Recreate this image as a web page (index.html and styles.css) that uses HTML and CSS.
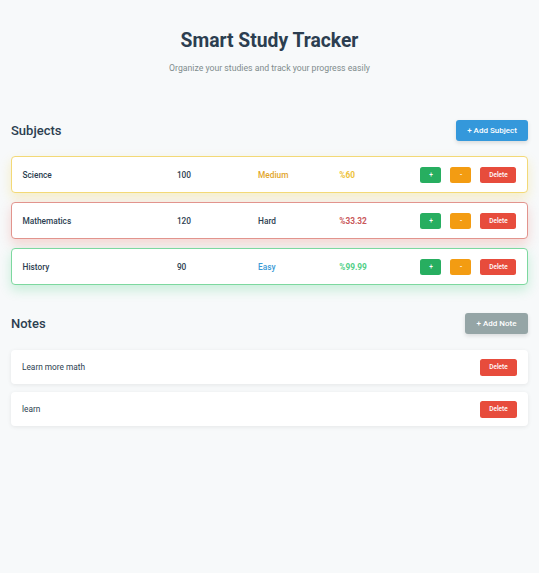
FILE: index.html
```html
<!DOCTYPE html>
<html>
<head>
<meta charset="utf-8">
<link rel="stylesheet" href="styles.css">
</head>
<body>
<div class="app">
  <header class="hero">
    <h1 class="title">Smart Study Tracker</h1>
    <p class="subtitle">Organize your studies and track your progress easily</p>
  </header>

  <section class="section subjects">
    <div class="section-head">
      <h2 class="section-title">Subjects</h2>
      <button class="add-btn add-blue">+ Add Subject</button>
    </div>
    <div class="list">
      <div class="subject medium">
        <span class="name">Science</span>
        <span class="hours">100</span>
        <span class="level level-medium">Medium</span>
        <span class="pct pct-yellow">%60</span>
        <span class="actions"><button class="sbtn plus">+</button><button class="sbtn minus">-</button><button class="sbtn del">Delete</button></span>
      </div>
      <div class="subject hard">
        <span class="name">Mathematics</span>
        <span class="hours">120</span>
        <span class="level level-hard">Hard</span>
        <span class="pct pct-red">%33.32</span>
        <span class="actions"><button class="sbtn plus">+</button><button class="sbtn minus">-</button><button class="sbtn del">Delete</button></span>
      </div>
      <div class="subject easy">
        <span class="name">History</span>
        <span class="hours">90</span>
        <span class="level level-easy">Easy</span>
        <span class="pct pct-green">%99.99</span>
        <span class="actions"><button class="sbtn plus">+</button><button class="sbtn minus">-</button><button class="sbtn del">Delete</button></span>
      </div>
    </div>
  </section>

  <section class="section notes">
    <div class="section-head">
      <h2 class="section-title">Notes</h2>
      <button class="add-btn add-gray">+ Add Note</button>
    </div>
    <div class="list notes-list">
      <div class="note"><span class="note-text">Learn more math</span><button class="sbtn del">Delete</button></div>
      <div class="note"><span class="note-text">learn</span><button class="sbtn del">Delete</button></div>
    </div>
  </section>
</div>
</body>
</html>
```
FILE: styles.css
```css
* { box-sizing: border-box; }
html, body { margin: 0; padding: 0; }
body {
  background: #f7f9fa;
  font-family: Roboto, "Liberation Sans", Arial, sans-serif;
  color: #2c3e50;
  min-height: 573px;
}
.app { padding: 28px 11px 0; }
.hero { text-align: center; }
.title {
  margin: 0;
  font-size: 19.3px;
  line-height: 25px;
  font-weight: 700;
  color: #2c3e50;
}
.subtitle {
  margin: 9px 0 0;
  font-size: 8.7px;
  line-height: 12px;
  color: #7f8c8d;
}
.section-head {
  display: flex;
  align-items: center;
  justify-content: space-between;
  height: 21px;
}
.subjects { margin-top: 46px; }
.notes { margin-top: 28px; }
.section-title {
  margin: 0;
  font-size: 13px;
  font-weight: 500;
  color: #2c3e50;
}
.add-btn {
  border: none;
  height: 21px;
  border-radius: 3px;
  color: #fff;
  font-family: inherit;
  font-size: 8px;
  font-weight: 500;
  padding: 0;
  box-shadow: 0 2px 4px rgba(0,0,0,0.12);
}
.add-blue { background: #3498db; width: 72px; }
.add-gray { background: #95a5a6; width: 63px; }
.list {
  margin-top: 15px;
  display: flex;
  flex-direction: column;
  gap: 9px;
}
.subject {
  display: grid;
  grid-template-columns: 2fr 1fr 1fr 1fr auto;
  column-gap: 8px;
  align-items: center;
  height: 37px;
  padding: 0 10.5px;
  background: #fff;
  border: 1.5px solid;
  border-radius: 4px;
  font-size: 8.3px;
  font-weight: 500;
}
.medium { border-color: #f3d977; box-shadow: 0 5px 12px rgba(241,196,15,0.22); }
.hard { border-color: #e2948d; box-shadow: 0 5px 12px rgba(231,76,60,0.22); }
.easy { border-color: #7dd89f; box-shadow: 0 5px 12px rgba(46,204,113,0.24); }
.name, .hours { color: #2c3e50; }
.level-medium { color: #e2a52a; }
.level-hard { color: #2c3e50; }
.level-easy { color: #3a9ad6; }
.pct { font-weight: 700; }
.pct-yellow { color: #eec23a; }
.pct-red { color: #c9585a; }
.pct-green { color: #4fcf86; }
.actions { display: flex; gap: 9px; }
.sbtn {
  border: none;
  height: 16px;
  padding: 0;
  border-radius: 2.5px;
  color: #fff;
  font-family: inherit;
  font-size: 6.5px;
  font-weight: 500;
}
.plus { background: #27ae60; width: 21px; }
.minus { background: #f39c12; width: 21px; }
.del { background: #e74c3c; width: 36px; }
.notes-list { margin-top: 16px; gap: 8px; }
.note {
  display: flex;
  align-items: center;
  justify-content: space-between;
  height: 34px;
  padding: 0 11px 0 11px;
  background: #fff;
  border-radius: 4px;
  box-shadow: 0 1px 4px rgba(0,0,0,0.08);
}
.note-text { font-size: 8.3px; color: #2c3e50; }
.note .del { width: 37px; height: 17px; }
```
